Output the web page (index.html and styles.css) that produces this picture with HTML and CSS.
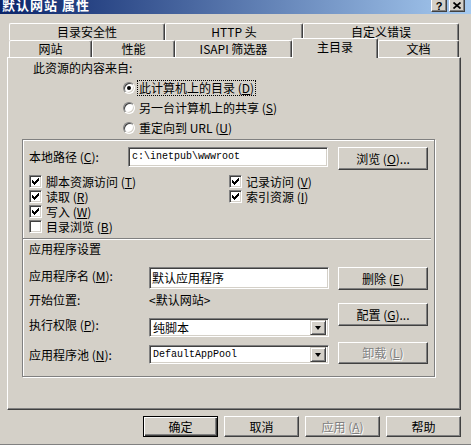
FILE: index.html
```html
<!DOCTYPE html>
<html lang="zh-CN">

<head>
	<meta charset="UTF-8">
	<title>默认网站 属性</title>
	<link rel="stylesheet" href="styles.css">
</head>

<body>
	<div class="window">
		<div class="titlebar">
			<span class="title">默认网站 属性</span>
			<div class="title-btns">
				<span class="tbtn help">?</span>
				<span class="tbtn">
					<svg width="8" height="7" viewBox="0 0 8 7"><path d="M0.5 0.5L7.5 6.5M7.5 0.5L0.5 6.5" stroke="#000" stroke-width="1.7" /></svg>
				</span>
			</div>
		</div>

		<div class="tabs">
			<div class="tab-row">
				<div class="tab tab-security">目录安全性</div>
				<div class="tab tab-http">HTTP 头</div>
				<div class="tab tab-errors">自定义错误</div>
			</div>
			<div class="tab-row">
				<div class="tab tab-site">网站</div>
				<div class="tab tab-perf">性能</div>
				<div class="tab tab-isapi">ISAPI 筛选器</div>
				<div class="tab tab-home active">主目录</div>
				<div class="tab tab-docs">文档</div>
			</div>
		</div>

		<div class="panel">
			<div class="source-title">此资源的内容来自:</div>
			<div class="radio-list">
				<div class="radio-row">
					<span class="radio checked"></span>
					<span class="radio-label focus">此计算机上的目录 (<u>D</u>)</span>
				</div>
				<div class="radio-row">
					<span class="radio"></span>
					<span class="radio-label">另一台计算机上的共享 (<u>S</u>)</span>
				</div>
				<div class="radio-row">
					<span class="radio"></span>
					<span class="radio-label">重定向到 URL (<u>U</u>)</span>
				</div>
			</div>

			<div class="group">
				<div class="path-row">
					<span class="path-label">本地路径 (<u>C</u>):</span>
					<div class="field path-field mono">c:\inetpub\wwwroot</div>
					<div class="btn"><span>浏览 (<u>O</u>)...</span></div>
				</div>

				<div class="checks">
					<div class="check-item"><span class="checkbox checked"></span><span>脚本资源访问 (<u>T</u>)</span></div>
					<div class="check-item"><span class="checkbox checked"></span><span>记录访问 (<u>V</u>)</span></div>
					<div class="check-item"><span class="checkbox checked"></span><span>读取 (<u>R</u>)</span></div>
					<div class="check-item"><span class="checkbox checked"></span><span>索引资源 (<u>I</u>)</span></div>
					<div class="check-item first-col"><span class="checkbox checked"></span><span>写入 (<u>W</u>)</span></div>
					<div class="check-item first-col"><span class="checkbox"></span><span>目录浏览 (<u>B</u>)</span></div>
				</div>

				<div class="separator"></div>
				<div class="app-title">应用程序设置</div>

				<div class="app">
					<div class="app-fields">
						<div class="app-row row-name">
							<span class="app-label">应用程序名 (<u>M</u>):</span>
							<div class="field app-field">默认应用程序</div>
						</div>
						<div class="app-row row-start">
							<span class="app-label">开始位置:</span>
							<span>&lt;默认网站&gt;</span>
						</div>
						<div class="app-row row-exec">
							<span class="app-label">执行权限 (<u>P</u>):</span>
							<div class="field select">
								<span class="select-value">纯脚本</span>
								<span class="drop-btn"><span class="arrow"></span></span>
							</div>
						</div>
						<div class="app-row row-pool">
							<span class="app-label">应用程序池 (<u>N</u>):</span>
							<div class="field select">
								<span class="select-value mono">DefaultAppPool</span>
								<span class="drop-btn"><span class="arrow"></span></span>
							</div>
						</div>
					</div>
					<div class="app-buttons">
						<div class="btn"><span>删除 (<u>E</u>)</span></div>
						<div class="btn btn-config"><span>配置 (<u>G</u>)...</span></div>
						<div class="btn btn-unload disabled"><span>卸载 (<u>L</u>)</span></div>
					</div>
				</div>
			</div>
		</div>

		<div class="footer">
			<div class="btn btn-footer default">确定</div>
			<div class="btn btn-footer">取消</div>
			<div class="btn btn-footer disabled"><span>应用 (<u>A</u>)</span></div>
			<div class="btn btn-footer">帮助</div>
		</div>
	</div>
</body>

</html>
```

FILE: styles.css
```css
* {
	margin: 0;
	padding: 0;
	box-sizing: border-box;
}

body {
	width: 471px;
	height: 445px;
	overflow: hidden;
	background: #d4d0c8;
	font-family: "Noto Sans CJK SC", "Noto Sans", sans-serif;
	font-size: 12px;
	color: #000;
}

u {
	text-decoration-thickness: 1px;
	text-underline-offset: 1px;
}

.mono {
	font-family: "Liberation Mono", "DejaVu Sans Mono", monospace;
	font-size: 10px;
}

.window {
	height: 445px;
	border-bottom: 1px solid #808080;
	display: flex;
	flex-direction: column;
}

/* заголовок окна */
.titlebar {
	height: 14px;
	background: linear-gradient(to right, #0a246a, #a6caf0);
	display: flex;
	justify-content: space-between;
	overflow: hidden;
}

.title {
	color: #fff;
	font-weight: bold;
	font-size: 13px;
	line-height: 13px;
	margin: -2px 0 0 2px;
	letter-spacing: 1px;
}

.title-btns {
	display: flex;
	gap: 2px;
	margin-right: 6px;
}

.tbtn {
	width: 16px;
	height: 12px;
	background: #d4d0c8;
	border-left: 1px solid #fff;
	border-right: 1px solid #404040;
	border-bottom: 1px solid #404040;
	box-shadow: inset -1px -1px #808080;
	display: flex;
	align-items: center;
	justify-content: center;
}

.tbtn.help {
	font-family: "Liberation Sans", sans-serif;
	font-weight: bold;
	font-size: 11px;
	line-height: 10px;
}

/* вкладки */
.tabs {
	margin: 9px 0 0 9px;
	width: 450px;
}

.tab-row {
	display: flex;
	height: 17px;
}

.tab {
	height: 17px;
	border-top: 1px solid #fff;
	border-left: 1px solid #fff;
	border-right: 1px solid #404040;
	box-shadow: inset -1px 0 #808080;
	border-radius: 2px 2px 0 0;
	text-align: center;
	line-height: 16px;
	background: #d4d0c8;
}

.tab-security { width: 156px; }
.tab-http { width: 138px; }
.tab-errors { width: 156px; }
.tab-site { width: 83px; }
.tab-perf { width: 83px; }
.tab-isapi { width: 117px; }
.tab-home { width: 86px; }
.tab-docs { width: 81px; }

.tab.active {
	position: relative;
	z-index: 1;
	height: 20px;
	margin-top: -2px;
}

/* панель */
.panel {
	margin-left: 7px;
	width: 454px;
	height: 353px;
	border-top: 1px solid #fff;
	border-left: 1px solid #fff;
	border-right: 1px solid #404040;
	border-bottom: 1px solid #404040;
	box-shadow: inset -1px -1px #808080;
}

.source-title {
	line-height: 20px;
	padding-left: 25px;
}

.radio-list {
	padding-left: 115px;
}

.radio-row {
	height: 20px;
	display: flex;
	align-items: center;
}

.radio {
	width: 12px;
	height: 12px;
	border-radius: 50%;
	border: 1px solid;
	border-color: #808080 #fff #fff #808080;
	box-shadow: inset 1px 1px #404040, inset -1px -1px #d4d0c8;
	background: #fff;
	display: flex;
	align-items: center;
	justify-content: center;
	margin-right: 2px;
}

.radio.checked::after {
	content: "";
	width: 4px;
	height: 4px;
	border-radius: 50%;
	background: #000;
}

.radio-label {
	border: 1px dotted transparent;
	padding: 0 1px;
	line-height: 14px;
}

.radio-label.focus {
	border-color: #000;
}

/* рамка с путём */
.group {
	margin: 1px 0 0 14px;
	width: 413px;
	height: 238px;
	border: 1px solid #808080;
	box-shadow: inset 1px 1px #fff, 1px 1px #fff;
	padding: 7px 0 0 6px;
}

.path-row {
	display: flex;
	align-items: flex-start;
	height: 23px;
}

.path-label {
	width: 99px;
	line-height: 20px;
}

.field {
	background: #fff;
	border: 1px solid;
	border-color: #808080 #fff #fff #808080;
	box-shadow: inset 1px 1px #404040, inset -1px -1px #d4d0c8;
}

.path-field {
	width: 200px;
	height: 20px;
	line-height: 18px;
	padding-left: 3px;
}

.btn {
	width: 90px;
	height: 23px;
	background: #d4d0c8;
	border: 1px solid;
	border-color: #fff #404040 #404040 #fff;
	box-shadow: inset -1px -1px #808080;
	display: flex;
	align-items: center;
	justify-content: center;
	line-height: 14px;
}

.path-row .btn {
	margin-left: 10px;
}

.btn.disabled {
	color: #808080;
	text-shadow: 1px 1px #fff;
}

.btn.default {
	border-color: #000;
	box-shadow: inset 1px 1px #fff, inset -1px -1px #404040, inset -2px -2px #808080;
}

.checks {
	margin-top: 3px;
	display: grid;
	grid-template-columns: 200px auto;
	grid-template-rows: 16px 14px 16px 14px;
}

.check-item {
	display: flex;
	align-items: center;
	gap: 4px;
	line-height: 13px;
}

.check-item.first-col {
	grid-column: 1;
}

.checkbox {
	width: 13px;
	height: 13px;
	background: #fff;
	border: 1px solid;
	border-color: #808080 #fff #fff #808080;
	box-shadow: inset 1px 1px #404040, inset -1px -1px #d4d0c8;
	display: flex;
	align-items: center;
	justify-content: center;
}

.checkbox.checked::after {
	content: "";
	width: 7px;
	height: 7px;
	background: url("data:image/svg+xml;utf8,<svg xmlns='http://www.w3.org/2000/svg' width='7' height='7' shape-rendering='crispEdges'><path d='M0 2H1V3H2V4H3V3H4V2H5V1H6V0H7V3H6V4H5V5H4V6H3V7H2V6H1V5H0Z' fill='black'/></svg>");
}

.separator {
	margin: 5px 0 0 -6px;
	width: 408px;
	height: 2px;
	border-top: 1px solid #808080;
	border-bottom: 1px solid #fff;
}

.app-title {
	line-height: 18px;
}

.app {
	display: flex;
	margin-top: 9px;
}

.app-fields {
	width: 300px;
}

.app-row {
	display: flex;
	align-items: center;
}

.app-label {
	width: 120px;
}

.row-name {
	height: 22px;
}

.row-name .app-label {
	margin-top: -6px;
}

.app-field {
	width: 180px;
	height: 22px;
	line-height: 18px;
	padding-left: 2px;
	padding-top: 1px;
}

.row-start {
	height: 20px;
}

.row-exec {
	margin-top: 9px;
	height: 19px;
}

.row-exec .app-label {
	margin-top: -6px;
}

.row-pool {
	margin-top: 8px;
	height: 19px;
}

.select {
	width: 180px;
	height: 19px;
	display: flex;
	align-items: center;
	padding: 2px;
}

.select-value {
	flex: 1;
	padding-left: 1px;
	line-height: 15px;
}

.drop-btn {
	width: 16px;
	height: 15px;
	background: #d4d0c8;
	border: 1px solid;
	border-color: #d4d0c8 #404040 #404040 #d4d0c8;
	box-shadow: inset 1px 1px #fff, inset -1px -1px #808080;
	display: flex;
	align-items: center;
	justify-content: center;
}

.arrow {
	width: 0;
	height: 0;
	border-left: 3.5px solid transparent;
	border-right: 3.5px solid transparent;
	border-top: 4px solid #000;
}

.app-buttons {
	margin-left: 9px;
	display: flex;
	flex-direction: column;
}

.btn-config {
	margin-top: 13px;
}

.btn-unload {
	margin-top: 16px;
	height: 22px;
}

/* нижние кнопки */
.footer {
	display: flex;
	justify-content: flex-end;
	gap: 6px;
	padding-right: 10px;
	margin-top: 6px;
}

.btn-footer {
	width: 75px;
	height: 21px;
}
```
